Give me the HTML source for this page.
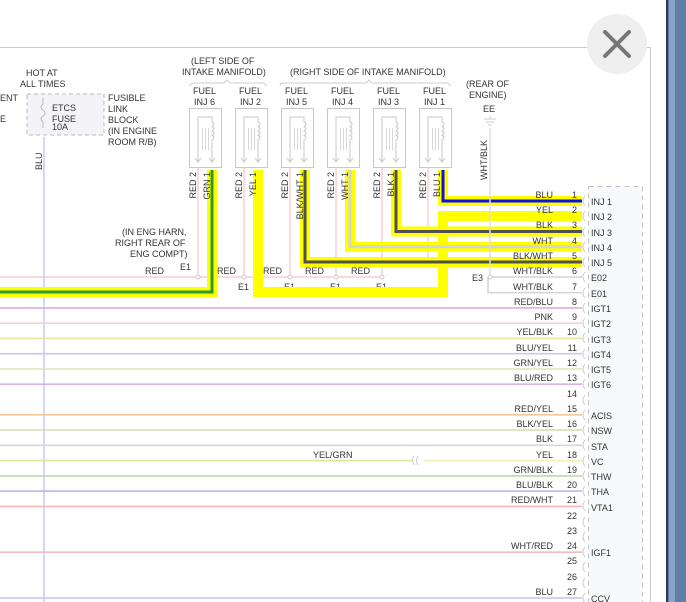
<!DOCTYPE html>
<html><head><meta charset="utf-8"><style>
html,body{margin:0;padding:0;width:686px;height:602px;overflow:hidden;background:#fff}
svg{display:block}
text{font-family:"Liberation Sans",sans-serif;font-size:9px;fill:#333}
</style></head><body>
<svg width="686" height="602" viewBox="0 0 686 602" xmlns="http://www.w3.org/2000/svg">
<rect width="686" height="602" fill="#fff"/>
<line x1="0" y1="47.5" x2="650" y2="47.5" stroke="#ccc" stroke-width="1"/>
<line x1="650.5" y1="47" x2="650.5" y2="602" stroke="#ccc" stroke-width="1"/>
<rect x="666" y="0" width="20" height="602" fill="#5f7fa8"/>
<rect x="666" y="0" width="2" height="602" fill="#2a3a50"/>
<rect x="669" y="0" width="6" height="602" fill="#8aa4c6"/>
<circle cx="617" cy="44" r="30" fill="#efefef"/>
<path d="M605 32 L629 56 M629 32 L605 56" stroke="#777" stroke-width="4" stroke-linecap="round"/>

<text x="0" y="101">ENT</text>
<text x="0" y="122">E</text>
<text x="26" y="76">HOT AT</text>
<text x="20" y="87">ALL TIMES</text>
<rect x="27" y="94" width="77" height="41" fill="#f4f4f8" stroke="#bbb" stroke-dasharray="4,3"/>
<path d="M43 98 v6 q-4 3 0 6 q4 3 0 6 q-4 3 0 6 v6" stroke="#bbb" fill="none"/>
<text x="52" y="111">ETCS</text>
<text x="52" y="122">FUSE</text>
<text x="52" y="130">10A</text>
<text x="108" y="101">FUSIBLE</text>
<text x="108" y="112">LINK</text>
<text x="108" y="123">BLOCK</text>
<text x="108" y="134">(IN ENGINE</text>
<text x="108" y="145">ROOM R/B)</text>
<line x1="44" y1="137" x2="44" y2="602" stroke="#c8c8f4" stroke-width="1.5"/>
<text transform="translate(42,170) rotate(-90)">BLU</text>

<g stroke-width="1.6" fill="none">
<line x1="0" y1="307.9" x2="582" y2="307.9" stroke="#dcaee0"/>
<line x1="0" y1="323.2" x2="582" y2="323.2" stroke="#f7cfd4"/>
<line x1="0" y1="338.4" x2="582" y2="338.4" stroke="#e6e6a6"/>
<line x1="0" y1="353.7" x2="582" y2="353.7" stroke="#c8c8ee"/>
<line x1="0" y1="369" x2="582" y2="369" stroke="#dbe8b0"/>
<line x1="0" y1="384.2" x2="582" y2="384.2" stroke="#d8b0e8"/>
<line x1="0" y1="414.8" x2="582" y2="414.8" stroke="#f2c89a"/>
<line x1="0" y1="430" x2="582" y2="430" stroke="#d8d8b0"/>
<line x1="0" y1="445.3" x2="582" y2="445.3" stroke="#d6d6d6"/>
<line x1="0" y1="460.6" x2="412" y2="460.6" stroke="#d8e89a"/>
<line x1="424" y1="460.6" x2="582" y2="460.6" stroke="#f2f2b4"/>
<line x1="0" y1="475.9" x2="582" y2="475.9" stroke="#bcd8a8"/>
<line x1="0" y1="491.1" x2="582" y2="491.1" stroke="#b8b8e8"/>
<line x1="0" y1="506.4" x2="582" y2="506.4" stroke="#f8b8b8"/>
<line x1="0" y1="552.2" x2="582" y2="552.2" stroke="#f8b8c4"/>
<line x1="0" y1="598" x2="582" y2="598" stroke="#c4c4f0"/>
</g>
<path d="M414 456 q-3 4.6 0 9.2 M418 456 q-3 4.6 0 9.2" stroke="#ccc" fill="none"/>
<text x="313" y="458">YEL/GRN</text>

<g stroke="#f6c4c4" stroke-width="1.2" fill="none">
<line x1="0" y1="277" x2="382" y2="277"/>
<line x1="198" y1="168" x2="198" y2="277"/>
<line x1="244" y1="168" x2="244" y2="277"/>
<line x1="290" y1="168" x2="290" y2="277"/>
<line x1="336" y1="168" x2="336" y2="277"/>
<line x1="382" y1="168" x2="382" y2="277"/>
<line x1="428" y1="168" x2="428" y2="262"/>
</g>
<g fill="#fff" stroke="#ccc"><circle cx="198" cy="277" r="2"/><circle cx="244" cy="277" r="2"/><circle cx="290" cy="277" r="2"/><circle cx="336" cy="277" r="2"/><circle cx="382" cy="277" r="2"/></g>
<text x="145" y="274">RED</text><text x="180" y="270">E1</text>
<text x="217" y="274">RED</text><text x="238" y="290">E1</text>
<text x="263" y="274">RED</text><text x="284" y="290">E1</text>
<text x="305" y="274">RED</text><text x="330" y="290">E1</text>
<text x="351" y="274">RED</text><text x="376" y="290">E1</text>
<text x="122" y="235">(IN ENG HARN,</text>
<text x="115" y="246">RIGHT REAR OF</text>
<text x="130" y="257">ENG COMPT)</text>

<g stroke="#ffff00" stroke-width="10" fill="none" stroke-linejoin="miter">
<path d="M212 170 V292 H0"/>
<path d="M258 170 V292 H443 V216 H582"/>
<path d="M305 170 V262 H582"/>
<path d="M350 170 V246.8 H582"/>
<path d="M396 170 V231.5 H582"/>
<path d="M443 170 V201 H582"/>
</g>
<g stroke-width="3" fill="none">
<path d="M212 170 V292 H0" stroke="#2a9a2a"/>
<path d="M305 170 V262 H582" stroke="#505050"/>
<path d="M350 170 V246.8 H582" stroke="#d4d4d4"/>
<path d="M396 170 V231.5 H582" stroke="#505050"/>
<path d="M443 170 V201 H582" stroke="#1010e0"/>
</g>

<text x="191" y="64">(LEFT SIDE OF</text>
<text x="182" y="75">INTAKE MANIFOLD)</text>
<text x="290" y="75">(RIGHT SIDE OF INTAKE MANIFOLD)</text>
<path d="M190 86 q0 -3 4 -3 H224 l3 -3 l3 3 H262 q4 0 4 3" stroke="#ccc" fill="none"/>
<path d="M280 86 q0 -3 4 -3 H366 l3 -3 l3 3 H446 q4 0 4 3" stroke="#ccc" fill="none"/>
<text x="466" y="87">(REAR OF</text>
<text x="469" y="98">ENGINE)</text>
<text x="483" y="112">EE</text>
<path d="M484 119 h12 M486 122 h8 M488 125 h4 M490 116 v3" stroke="#ccc" fill="none"/>
<line x1="490" y1="128" x2="490" y2="277" stroke="#ddd" stroke-width="1.5"/>
<text transform="translate(487,180) rotate(-90)">WHT/BLK</text>

<g fill="none" stroke="#c8c8c8">
<g id="inj">
<rect x="189.5" y="108.5" width="32" height="59"/>
<path d="M198 162 V117 H212 V122 q4 2 0 4.5 q4 2 0 4.5 q4 2 0 4.5 q4 2 0 4.5 V162"/>
<path d="M202.5 128 V150 M205.5 128 V150 M208.5 128 V150" stroke-width="0.7"/>
<path d="M195 158 l3 4 l3 -4 M209 158 l3 4 l3 -4"/>
</g>
<use href="#inj" x="46"/><use href="#inj" x="92"/><use href="#inj" x="138"/><use href="#inj" x="184"/><use href="#inj" x="230"/>
</g>
<text x="193" y="94">FUEL</text><text x="194" y="105">INJ 6</text>
<text x="239" y="94">FUEL</text><text x="240" y="105">INJ 2</text>
<text x="285" y="94">FUEL</text><text x="286" y="105">INJ 5</text>
<text x="331" y="94">FUEL</text><text x="332" y="105">INJ 4</text>
<text x="377" y="94">FUEL</text><text x="378" y="105">INJ 3</text>
<text x="423" y="94">FUEL</text><text x="424" y="105">INJ 1</text>
<g text-anchor="end">
<text transform="translate(196,172) rotate(-90)">RED 2</text>
<text transform="translate(210,172) rotate(-90)">GRN 1</text>
<text transform="translate(242,172) rotate(-90)">RED 2</text>
<text transform="translate(256,172) rotate(-90)">YEL 1</text>
<text transform="translate(288,172) rotate(-90)">RED 2</text>
<text transform="translate(303,172) rotate(-90)">BLK/WHT 1</text>
<text transform="translate(334,172) rotate(-90)">RED 2</text>
<text transform="translate(348,172) rotate(-90)">WHT 1</text>
<text transform="translate(380,172) rotate(-90)">RED 2</text>
<text transform="translate(394,172) rotate(-90)">BLK 1</text>
<text transform="translate(426,172) rotate(-90)">RED 2</text>
<text transform="translate(440,172) rotate(-90)">BLU 1</text>
</g>

<path d="M490 277 H582 M488 277 V292.6 H582" stroke="#d4d4d4" stroke-width="1.5" fill="none"/>
<circle cx="490" cy="277" r="2" fill="#fff" stroke="#ccc"/>
<text x="472" y="281">E3</text>

<rect x="588.5" y="186.5" width="54" height="420" fill="#f8f9fc" stroke="#c4c4c4" stroke-dasharray="5,4"/>
<g stroke="#ccc" fill="none">
<path d="M585 196 q-4 5 0 10 M585 211 q-4 5 0 10 M585 227 q-4 5 0 10 M585 242 q-4 5 0 10 M585 257 q-4 5 0 10 M585 272 q-4 5 0 10 M585 288 q-4 5 0 10 M585 303 q-4 5 0 10 M585 318 q-4 5 0 10 M585 333 q-4 5 0 10 M585 349 q-4 5 0 10 M585 364 q-4 5 0 10 M585 379 q-4 5 0 10 M585 395 q-4 5 0 10 M585 410 q-4 5 0 10 M585 425 q-4 5 0 10 M585 440 q-4 5 0 10 M585 456 q-4 5 0 10 M585 471 q-4 5 0 10 M585 486 q-4 5 0 10 M585 501 q-4 5 0 10 M585 517 q-4 5 0 10 M585 532 q-4 5 0 10 M585 547 q-4 5 0 10 M585 562 q-4 5 0 10 M585 578 q-4 5 0 10 M585 593 q-4 5 0 10"/>
</g>
<g text-anchor="end">
<text x="553" y="198">BLU</text><text x="577" y="198">1</text>
<text x="553" y="213">YEL</text><text x="577" y="213">2</text>
<text x="553" y="228">BLK</text><text x="577" y="228">3</text>
<text x="553" y="244">WHT</text><text x="577" y="244">4</text>
<text x="553" y="259">BLK/WHT</text><text x="577" y="259">5</text>
<text x="553" y="274">WHT/BLK</text><text x="577" y="274">6</text>
<text x="553" y="290">WHT/BLK</text><text x="577" y="290">7</text>
<text x="553" y="305">RED/BLU</text><text x="577" y="305">8</text>
<text x="553" y="320">PNK</text><text x="577" y="320">9</text>
<text x="553" y="335">YEL/BLK</text><text x="577" y="335">10</text>
<text x="553" y="351">BLU/YEL</text><text x="577" y="351">11</text>
<text x="553" y="366">GRN/YEL</text><text x="577" y="366">12</text>
<text x="553" y="381">BLU/RED</text><text x="577" y="381">13</text>
<text x="577" y="397">14</text>
<text x="553" y="412">RED/YEL</text><text x="577" y="412">15</text>
<text x="553" y="427">BLK/YEL</text><text x="577" y="427">16</text>
<text x="553" y="442">BLK</text><text x="577" y="442">17</text>
<text x="553" y="458">YEL</text><text x="577" y="458">18</text>
<text x="553" y="473">GRN/BLK</text><text x="577" y="473">19</text>
<text x="553" y="488">BLU/BLK</text><text x="577" y="488">20</text>
<text x="553" y="503">RED/WHT</text><text x="577" y="503">21</text>
<text x="577" y="519">22</text>
<text x="577" y="534">23</text>
<text x="553" y="549">WHT/RED</text><text x="577" y="549">24</text>
<text x="577" y="564">25</text>
<text x="577" y="580">26</text>
<text x="553" y="595">BLU</text><text x="577" y="595">27</text>
</g>
<g>
<text x="591" y="205">INJ 1</text>
<text x="591" y="220">INJ 2</text>
<text x="591" y="236">INJ 3</text>
<text x="591" y="251">INJ 4</text>
<text x="591" y="266">INJ 5</text>
<text x="591" y="281">E02</text>
<text x="591" y="297">E01</text>
<text x="591" y="312">IGT1</text>
<text x="591" y="327">IGT2</text>
<text x="591" y="343">IGT3</text>
<text x="591" y="358">IGT4</text>
<text x="591" y="373">IGT5</text>
<text x="591" y="388">IGT6</text>
<text x="591" y="419">ACIS</text>
<text x="591" y="434">NSW</text>
<text x="591" y="450">STA</text>
<text x="591" y="465">VC</text>
<text x="591" y="480">THW</text>
<text x="591" y="495">THA</text>
<text x="591" y="511">VTA1</text>
<text x="591" y="556">IGF1</text>
<text x="591" y="602">CCV</text>
</g>
</svg>
</body></html>
